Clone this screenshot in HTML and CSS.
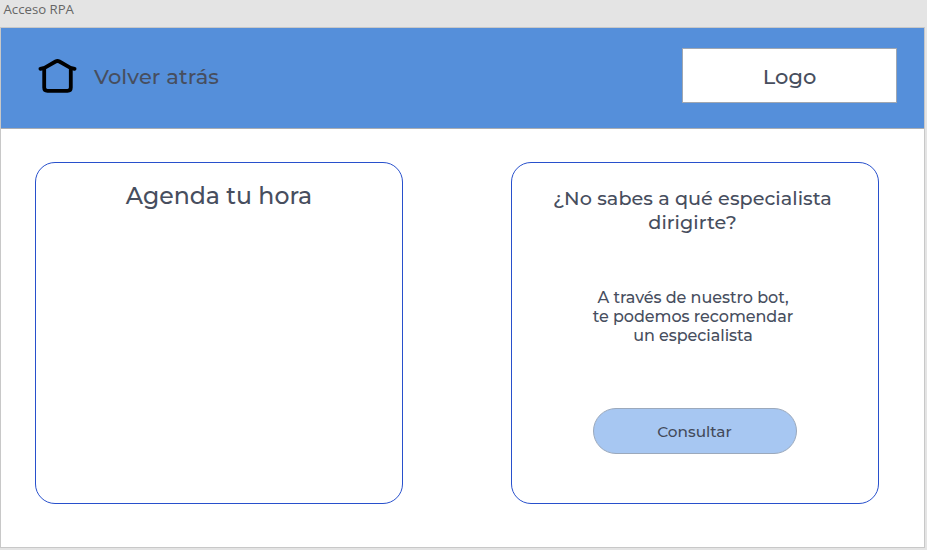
FILE: index.html
```html
<!DOCTYPE html>
<html lang="es">
<head>
<meta charset="utf-8">
<title>Acceso RPA</title>
<link rel="stylesheet" href="styles.css">
</head>
<body>
<div class="frame-name"><span>Acceso RPA</span></div>
<div class="frame">
  <header class="header">
    <a class="back">
      <svg class="home" width="40" height="38" viewBox="0 0 40 38" fill="none" stroke="#000" stroke-width="3.8" stroke-linecap="round" stroke-linejoin="round"><path d="M2.4 11.8 L6.5 10.8 L17.6 4.5 Q19.5 3.5 21.4 4.5 L32.5 10.8 L36.6 11.8"/><path d="M6.2 11.5V30.5Q6.2 33.8 9.5 33.8H29.5Q32.8 33.8 32.8 30.5V11.5"/></svg>
      <span class="back-text">Volver atrás</span>
    </a>
    <div class="logo"><span>Logo</span></div>
  </header>
  <main class="cards">
    <section class="card">
      <h1 class="title"><span>Agenda tu hora</span></h1>
    </section>
    <section class="card">
      <h2 class="question"><span>¿No sabes a qué especialista</span><br><span>dirigirte?</span></h2>
      <p class="text"><span>A través de nuestro bot,</span><br><span>te podemos recomendar</span><br><span>un especialista</span></p>
      <button class="button"><span>Consultar</span></button>
    </section>
  </main>
</div>
</body>
</html>
```
FILE: styles.css
```css
* { box-sizing: border-box; }
body {
  margin: 0;
  height: 550px;
  overflow: hidden;
  background: #e4e4e4;
  color: #474e5e;
  font-family: Montserrat, Inter, sans-serif;
  font-weight: 500;
}
.frame-name {
  height: 27px;
  padding-left: 3.5px;
  font: 13.2px/18px "Open Sans", sans-serif;
  color: #666;
}
.frame {
  width: 925px;
  height: 521px;
  border: 1px solid #c8c8c8;
  background: #fff;
}
.header {
  display: flex;
  align-items: center;
  justify-content: space-between;
  height: 101px;
  padding: 0 27px 4px 37px;
  background: #558fda;
  border-bottom: 1px solid #a9adb3;
}
.back { display: flex; align-items: center; gap: 16px; }
.back-text { font-size: 21px; letter-spacing: 0.12px; }
.logo {
  display: flex;
  align-items: center;
  justify-content: center;
  width: 215px;
  height: 55px;
  margin-top: -1px;
  padding-top: 1px;
  background: #fff;
  border: 1px solid #a0a7b1;
  font-size: 21px;
}
.cards {
  display: flex;
  justify-content: space-between;
  padding: 33px 45px 0 34px;
}
.card {
  display: flex;
  flex-direction: column;
  align-items: center;
  width: 368px;
  height: 342px;
  border: 1px solid #2850cc;
  border-radius: 20px;
  text-align: center;
}
.title, .question { margin: 0; font-weight: 500; }
.title { margin-top: 18px; font-size: 23.6px; line-height: 30px; }
.question { margin: 23px 5px 0 0; font-size: 19.2px; line-height: 24px; letter-spacing: 0.05px; }
.text { margin: 54px 4px 0 0; font-size: 16px; line-height: 19px; letter-spacing: -0.05px; }
.button {
  width: 204px;
  height: 46px;
  margin: 63px 1px 0 0;
  border: 1px solid #9ba9bc;
  border-radius: 23px;
  background: #a7c7f2;
  color: #434a5a;
  font: 500 15.3px Montserrat, Inter, sans-serif;
}
```
